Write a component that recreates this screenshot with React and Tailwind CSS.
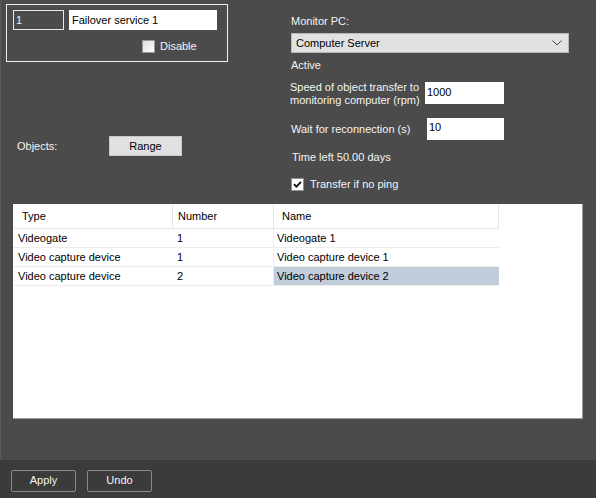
import React from "react";

const font = { fontFamily: '"Liberation Sans", Arial, sans-serif' };

function Check({ checked }) {
  return (
    <div className={`w-[13px] h-[13px] border ${checked ? "border-[#8f8f8f] bg-white" : "border-[#9a9a9a] bg-gradient-to-br from-[#dcdcdc] to-[#ffffff]"} flex items-center justify-center`}>
      {checked && (
        <svg width="9" height="9" viewBox="0 0 9 9">
          <path d="M1 4.2 L3.4 6.6 L8 1.8" stroke="#111" strokeWidth="1.8" fill="none" />
        </svg>
      )}
    </div>
  );
}

export default function App() {
  const rows = [
    ["Videogate", "1", "Videogate 1", false],
    ["Video capture device", "1", "Video capture device 1", false],
    ["Video capture device", "2", "Video capture device 2", true],
  ];
  return (
    <div className="w-[596px] h-[498px] bg-[#4b4b4b] flex flex-col text-[11px] leading-[13px] text-[#f4f4f4]" style={font}>
      <div className="flex-1 flex flex-col border-l border-[#5a5a5a]">
        <div className="flex h-[204px]">
          {/* left column */}
          <div className="w-[290px] pl-[5px] pt-[4px] flex flex-col">
            <div className="w-[222px] h-[58px] border border-[#f0f0f0] flex flex-col pt-[5px] pl-[6px]">
              <div className="flex gap-[5px]">
                <div className="w-[51px] h-[20px] border border-[#e8e8e8] bg-[#4b4b4b] pl-[2px] leading-[18px]">1</div>
                <div className="w-[148px] h-[20px] bg-white text-black pl-[3px] leading-[20px]">Failover service 1</div>
              </div>
              <div className="flex items-center mt-[10px] pl-[129px] gap-[5px]">
                <Check checked={false} />
                <span>Disable</span>
              </div>
            </div>
            <div className="flex items-center mt-[74px] pl-[11px]">
              <span className="w-[92px]">Objects:</span>
              <div className="w-[73px] h-[20px] bg-[#e1e1e1] border border-[#c8c8c8] text-black flex items-center justify-center">Range</div>
            </div>
          </div>
          {/* right column */}
          <div className="flex-1 flex flex-col pt-[15px]">
            <div>Monitor PC:</div>
            <div className="mt-[5px] w-[278px] h-[20px] bg-[#e1e1e1] border border-[#b8b8b8] text-black flex items-center justify-between pl-[4px] pr-[6px]">
              <span>Computer Server</span>
              <svg width="10" height="6" viewBox="0 0 10 6">
                <path d="M0.5 0.5 L5 5 L9.5 0.5" stroke="#444" strokeWidth="1" fill="none" />
              </svg>
            </div>
            <div className="mt-[6px]">Active</div>
            <div className="flex mt-[9px]">
              <div className="w-[135px] leading-[13px] -ml-[1px]">Speed of object transfer to monitoring computer (rpm)</div>
              <div className="w-[79px] h-[22px] bg-white text-black pl-[2px] leading-[20px] mt-[1px]">1000</div>
            </div>
            <div className="flex items-center mt-[11px]">
              <div className="w-[136px]">Wait for reconnection (s)</div>
              <div className="w-[77px] h-[22px] bg-white text-black pl-[2px] leading-[18px]">10</div>
            </div>
            <div className="mt-[11px] pl-[1px]">Time left 50.00 days</div>
            <div className="flex items-center mt-[14px] gap-[6px]">
              <Check checked={true} />
              <span>Transfer if no ping</span>
            </div>
          </div>
        </div>
        {/* table */}
        <div className="ml-[12px] w-[570px] h-[215px] bg-white border-r border-b border-[#9a9a9a] text-black">
          <div className="flex h-[25px] items-center">
            <div className="w-[160px] pl-[9px] h-full flex items-center border-r border-b border-[#e6e6e6]">Type</div>
            <div className="w-[101px] pl-[5px] h-full flex items-center border-r border-b border-[#e6e6e6]">Number</div>
            <div className="w-[225px] pl-[8px] h-full flex items-center border-r border-b border-[#e6e6e6]">Name</div>
          </div>
          {rows.map((r, i) => (
            <div key={i} className="flex h-[19px] border-b border-[#ececec] w-[486px]">
              <div className="w-[160px] pl-[5px] flex items-center">{r[0]}</div>
              <div className="w-[101px] pl-[4px] flex items-center border-r border-[#ececec]">{r[1]}</div>
              <div className={`w-[225px] pl-[3px] flex items-center ${r[3] ? "bg-[#c2cddb]" : ""}`}>{r[2]}</div>
            </div>
          ))}
        </div>
        <div className="flex-1" />
      </div>
      <div className="h-[38px] bg-[#3b3b3b] flex items-center pl-[11px] gap-[11px] pt-[3px]">
        <div className="w-[65px] h-[22px] border border-[#8a8a8a] rounded-[2px] flex items-center justify-center">Apply</div>
        <div className="w-[65px] h-[22px] border border-[#8a8a8a] rounded-[2px] flex items-center justify-center">Undo</div>
      </div>
    </div>
  );
}
